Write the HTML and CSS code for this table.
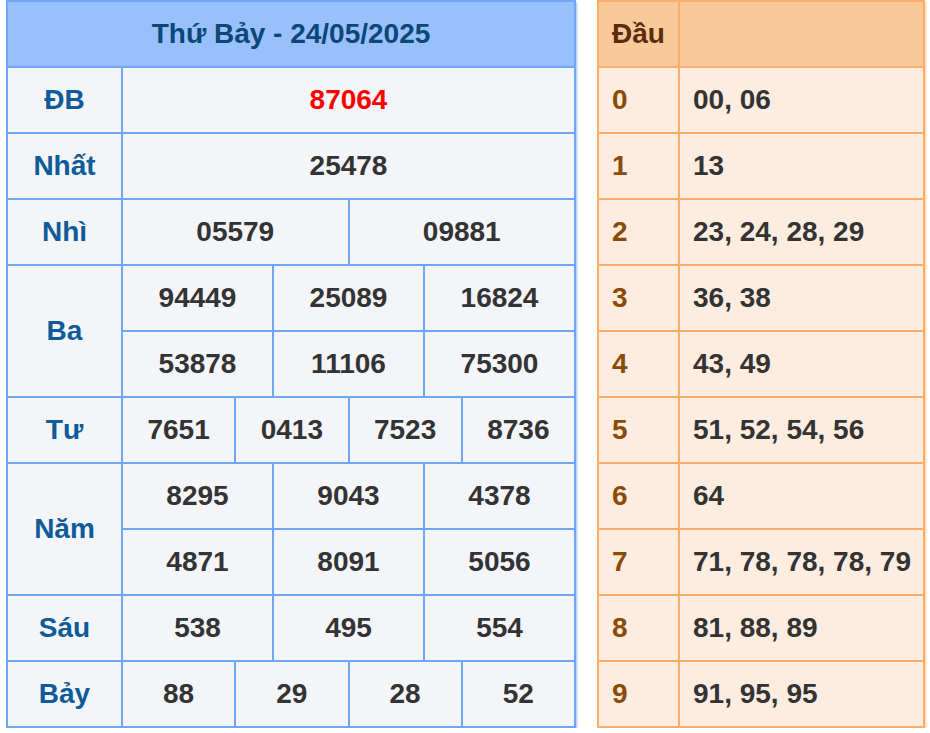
FILE: index.html
```html
<!DOCTYPE html>
<html lang="vi">
<head>
<meta charset="utf-8">
<title>XSMN Thứ Bảy 24/05/2025</title>
<link rel="stylesheet" href="styles.css">
</head>
<body>
<div class="wrap">
  <table class="kq">
    <colgroup>
      <col class="c-label">
      <col><col><col><col><col><col><col><col><col><col><col><col>
    </colgroup>
    <thead>
      <tr><th colspan="13" class="title">Thứ Bảy - 24/05/2025</th></tr>
    </thead>
    <tbody>
      <tr><td class="lbl">ĐB</td><td colspan="12" class="db">87064</td></tr>
      <tr><td class="lbl">Nhất</td><td colspan="12">25478</td></tr>
      <tr><td class="lbl">Nhì</td><td colspan="6">05579</td><td colspan="6">09881</td></tr>
      <tr><td class="lbl" rowspan="2">Ba</td><td colspan="4">94449</td><td colspan="4">25089</td><td colspan="4">16824</td></tr>
      <tr><td colspan="4">53878</td><td colspan="4">11106</td><td colspan="4">75300</td></tr>
      <tr><td class="lbl">Tư</td><td colspan="3">7651</td><td colspan="3">0413</td><td colspan="3">7523</td><td colspan="3">8736</td></tr>
      <tr><td class="lbl" rowspan="2">Năm</td><td colspan="4">8295</td><td colspan="4">9043</td><td colspan="4">4378</td></tr>
      <tr><td colspan="4">4871</td><td colspan="4">8091</td><td colspan="4">5056</td></tr>
      <tr><td class="lbl">Sáu</td><td colspan="4">538</td><td colspan="4">495</td><td colspan="4">554</td></tr>
      <tr><td class="lbl">Bảy</td><td colspan="3">88</td><td colspan="3">29</td><td colspan="3">28</td><td colspan="3">52</td></tr>
    </tbody>
  </table>

  <table class="dau">
    <colgroup><col class="c-head"><col></colgroup>
    <thead>
      <tr><th>Đầu</th><th></th></tr>
    </thead>
    <tbody>
      <tr><td class="d">0</td><td>00, 06</td></tr>
      <tr><td class="d">1</td><td>13</td></tr>
      <tr><td class="d">2</td><td>23, 24, 28, 29</td></tr>
      <tr><td class="d">3</td><td>36, 38</td></tr>
      <tr><td class="d">4</td><td>43, 49</td></tr>
      <tr><td class="d">5</td><td>51, 52, 54, 56</td></tr>
      <tr><td class="d">6</td><td>64</td></tr>
      <tr><td class="d">7</td><td>71, 78, 78, 78, 79</td></tr>
      <tr><td class="d">8</td><td>81, 88, 89</td></tr>
      <tr><td class="d">9</td><td>91, 95, 95</td></tr>
    </tbody>
  </table>
</div>
</body>
</html>
```

FILE: styles.css
```css
html, body {
  margin: 0;
  padding: 0;
  background: #ffffff;
}

body {
  font-family: "Liberation Sans", Arial, sans-serif;
  font-weight: bold;
  font-size: 28px;
  color: #333333;
}

.wrap {
  display: flex;
  align-items: flex-start;
  gap: 21px;
  padding: 0 5px 0 6px;
}

table {
  border-collapse: collapse;
  table-layout: fixed;
}

td, th {
  height: 64px;
  padding: 0;
  font-weight: bold;
}

/* ---------- Left: results ---------- */
.kq {
  width: 570px;
  border: 2px solid #6fa6f6;
  background: #f3f5f9;
  box-shadow: 1px 2px 2px rgba(80, 140, 240, 0.55);
}

.kq .c-label {
  width: 115px;
}

.kq td, .kq th {
  border: 2px solid #6fa6f6;
  text-align: center;
}

.kq .title {
  height: 64px;
  background: #98c0fa;
  color: #0c4778;
}

.kq .lbl {
  color: #0f5a98;
}

.kq .db {
  color: #ff0000;
}

/* ---------- Right: heads ---------- */
.dau {
  width: 328px;
  border: 2px solid #fbad69;
  background: #fdede0;
  box-shadow: 1px 2px 2px rgba(250, 160, 90, 0.55);
}

.dau .c-head {
  width: 81px;
}

.dau td, .dau th {
  border: 2px solid #fbad69;
  text-align: left;
  padding-left: 13px;
}

.dau th {
  height: 64px;
  background: #f9c99a;
  color: #5b2c0c;
}

.dau .d {
  color: #8b4a06;
}
```
